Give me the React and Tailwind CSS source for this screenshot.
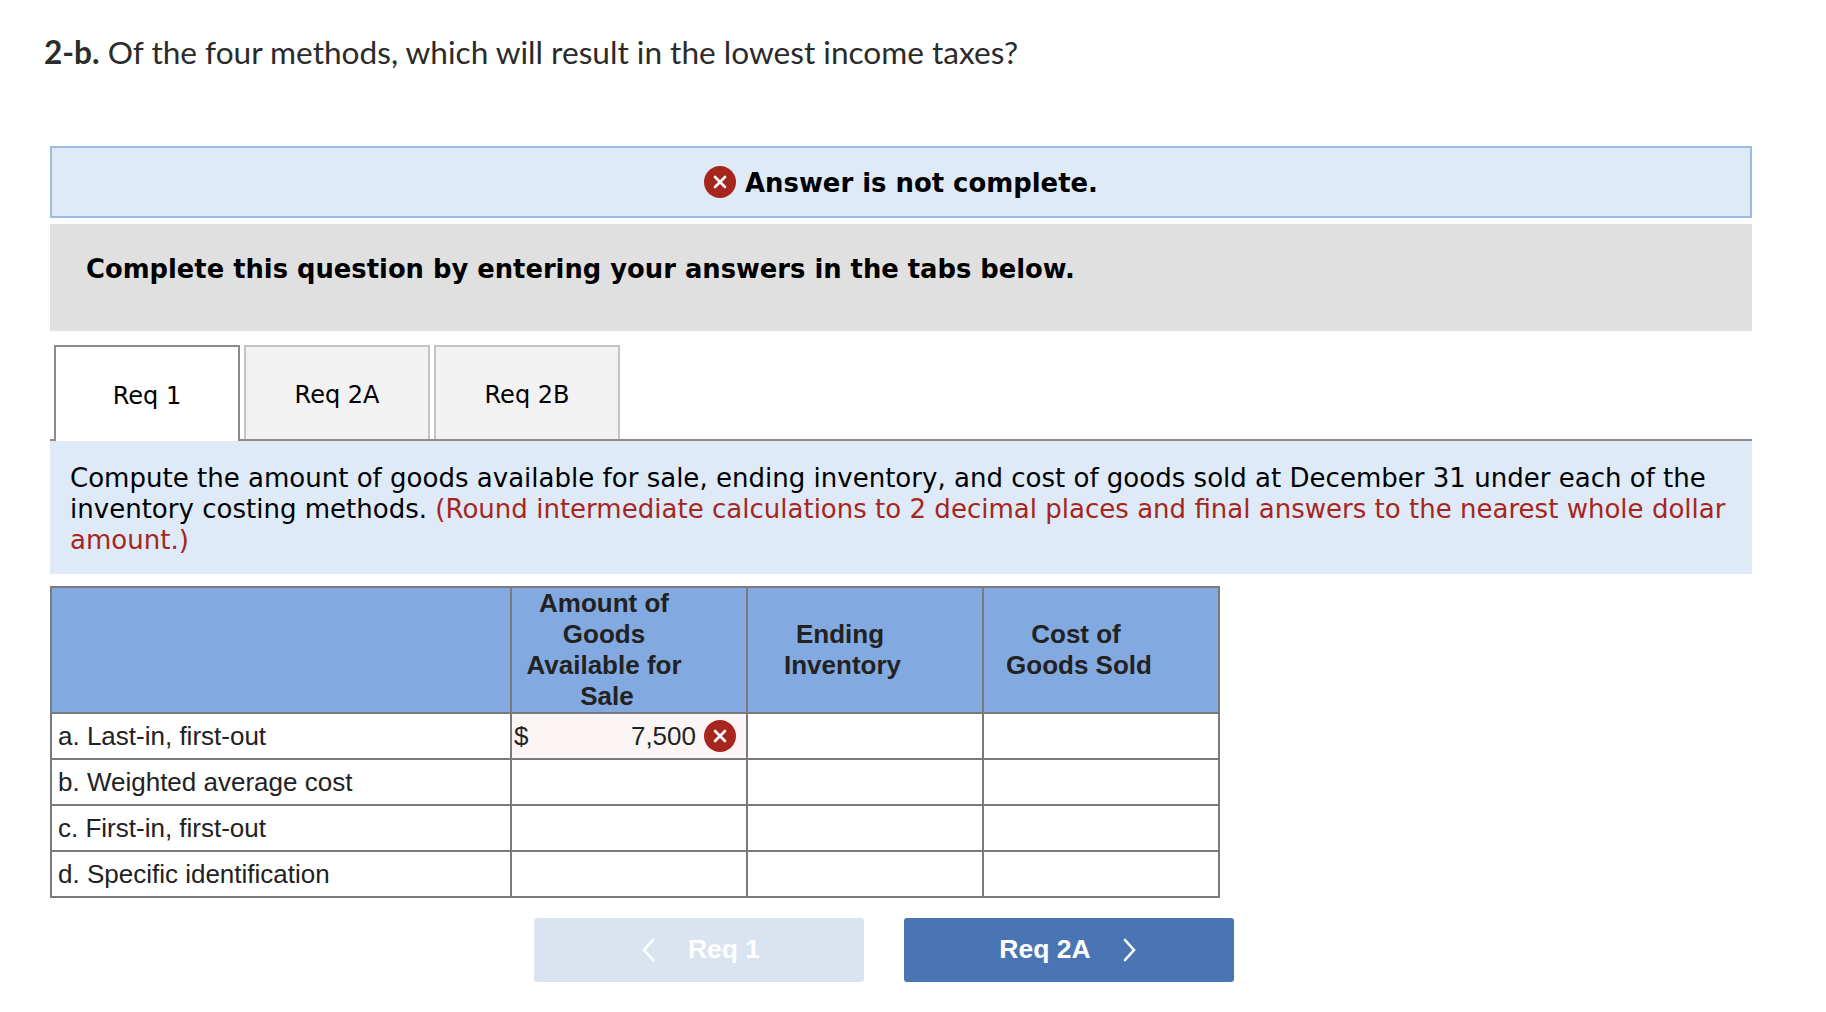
import React from "react";

const verdana = "font-['DejaVu_Sans',sans-serif]";

const XIcon = ({ size = 32 }) => (
  <svg width={size} height={size} viewBox="0 0 32 32" className="shrink-0">
    <circle cx="16" cy="16" r="16" fill="#a6261d" />
    <path d="M11 11 L21 21 M21 11 L11 21" stroke="#fff" strokeWidth="2.6" strokeLinecap="round" />
  </svg>
);

const Chevron = ({ dir }) => (
  <svg width="14" height="26" viewBox="0 0 14 26" className="shrink-0">
    <path
      d={dir === "left" ? "M12 3 L3 13 L12 23" : "M2 3 L11 13 L2 23"}
      fill="none"
      stroke="#fff"
      strokeWidth="2.6"
      strokeLinecap="round"
      strokeLinejoin="miter"
    />
  </svg>
);

const Tab = ({ label, active }) => (
  <div
    className={
      active
        ? "w-[186px] h-[96px] -mb-[2px] z-10 flex items-center justify-center pt-[4px] bg-white border-2 border-b-0 border-[#8c8c8c] text-[24px] text-black"
        : "w-[186px] h-[94px] flex items-center justify-center pt-[4px] bg-[#f2f2f2] border-2 border-b-0 border-[#c4c4c4] text-[24px] text-black"
    }
  >
    {label}
  </div>
);

const rows = [
  "a. Last-in, first-out",
  "b. Weighted average cost",
  "c. First-in, first-out",
  "d. Specific identification",
];

const headCell = "border-2 border-[#7a7a7a] bg-[#82aae0] font-bold text-center align-middle leading-[31px] p-0";
const bodyCell = "border-2 border-[#7a7a7a] p-0 h-[46px]";

export default function App() {
  return (
    <div className="w-[1826px] h-[1012px] bg-white overflow-hidden text-black">
      <div className="pl-[44px] pt-[32px] h-[146px] font-['Lato',sans-serif] text-[31.6px] leading-[40px] text-[#2b2b2b]">
        <b className="font-bold">2-b.</b> Of the four methods, which will result in the lowest income taxes?
      </div>

      <div className={`mx-[50px] w-[1702px] ${verdana}`}>
        <div className="h-[72px] flex items-center justify-center gap-[9px] bg-[#deeaf8] border-2 border-[#9bbbe0] text-[25.9px] font-bold">
          <XIcon />
          <span className="pt-[3px]">Answer is not complete.</span>
        </div>

        <div className="mt-[6px] h-[107px] bg-[#e0e0e0] pl-[36px] pt-[29px] text-[25.8px] leading-[32px] font-bold">
          Complete this question by entering your answers in the tabs below.
        </div>

        <div className="mt-[14px] flex items-end gap-[4px] pl-[4px] border-b-2 border-[#8c8c8c] h-[96px]">
          <Tab label="Req 1" active />
          <Tab label="Req 2A" />
          <Tab label="Req 2B" />
        </div>

        <div className="h-[133px] bg-[#deeaf8] px-[20px] pt-[22px] text-[26.04px] leading-[31px]">
          Compute the amount of goods available for sale, ending inventory, and cost of goods sold at December 31 under each of the inventory costing methods.{" "}
          <span className="text-[#a6261d]">
            (Round intermediate calculations to 2 decimal places and final answers to the nearest whole dollar amount.)
          </span>
        </div>

        <table className="mt-[12px] w-[1168px] table-fixed border-collapse font-['Liberation_Sans',sans-serif] text-[26px] text-[#222]">
          <colgroup>
            <col className="w-[460px]" />
            <col className="w-[236px]" />
            <col className="w-[236px]" />
            <col className="w-[236px]" />
          </colgroup>
          <thead>
            <tr className="h-[126px]">
              <th className={headCell}></th>
              <th className={headCell}>
                <div className="pl-[10px] pr-[60px]">
                  Amount of<br />Goods<br />Available for<br /><span className="pl-[6px]">Sale</span>
                </div>
              </th>
              <th className={headCell}>
                <div className="pl-[10px] pr-[60px]">
                  Ending<br /><span className="pl-[5px]">Inventory</span>
                </div>
              </th>
              <th className={headCell}>
                <div className="pl-[10px] pr-[60px]">
                  Cost of<br /><span className="pl-[6px]">Goods Sold</span>
                </div>
              </th>
            </tr>
          </thead>
          <tbody>
            {rows.map((row, i) => (
              <tr key={row}>
                <td className={`${bodyCell} pl-[6px]`}>{row}</td>
                {i === 0 ? (
                  <td className={`${bodyCell} bg-[#fcf5f5]`}>
                    <div className="flex items-center justify-between pl-[2px] pr-[10px]">
                      <span>$</span>
                      <span className="flex items-center gap-[8px]">
                        7,500
                        <XIcon />
                      </span>
                    </div>
                  </td>
                ) : (
                  <td className={bodyCell}></td>
                )}
                <td className={bodyCell}></td>
                <td className={bodyCell}></td>
              </tr>
            ))}
          </tbody>
        </table>

        <div className="mt-[20px] ml-[484px] flex gap-[40px] font-['Liberation_Sans',sans-serif] text-[26.5px] font-bold text-white">
          <div className="w-[330px] h-[64px] rounded-[3px] bg-[#dae4f0] flex items-center justify-center gap-[33px] pl-[3px]">
            <Chevron dir="left" />
            <span>Req 1</span>
          </div>
          <div className="w-[330px] h-[64px] rounded-[3px] bg-[#4a75b5] flex items-center justify-center gap-[32px] pr-[2px]">
            <span>Req 2A</span>
            <Chevron dir="right" />
          </div>
        </div>
      </div>
    </div>
  );
}
